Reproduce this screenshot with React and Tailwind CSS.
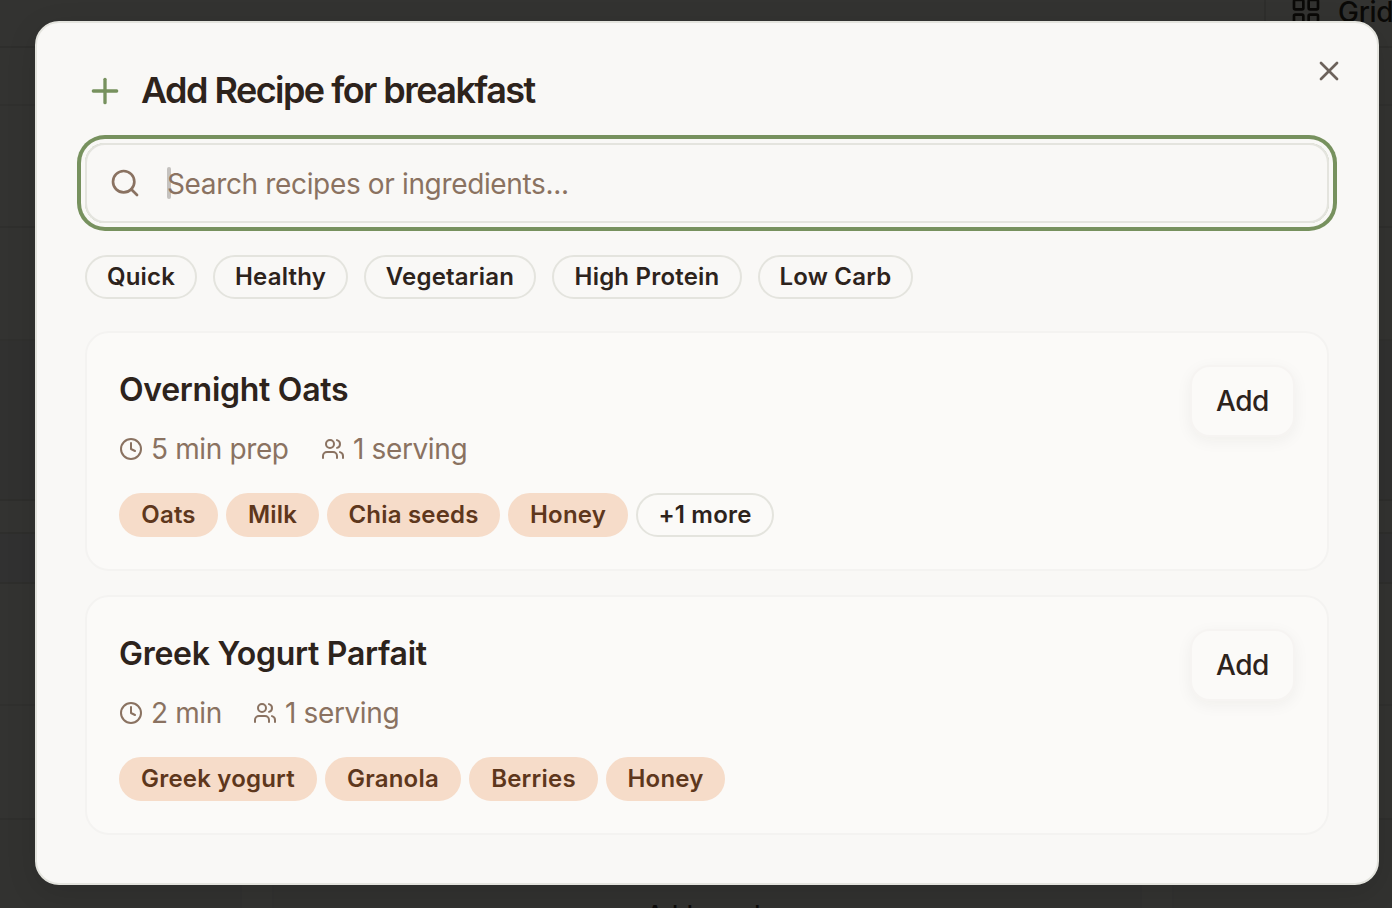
import React from "react";
import { Clock, LayoutGrid, Plus, Search, Users, X } from "lucide-react";

const filters = [
  { label: "Quick", w: "w-[112px]" },
  { label: "Healthy", w: "w-[135px]" },
  { label: "Vegetarian", w: "w-[172px]" },
  { label: "High Protein", w: "w-[190px]" },
  { label: "Low Carb", w: "w-[155px]" },
];

const recipes = [
  {
    name: "Overnight Oats",
    time: "5 min prep",
    timeWidth: "w-[170px]",
    servings: "1 serving",
    tags: [
      { label: "Oats", w: "w-[99px]" },
      { label: "Milk", w: "w-[93px]" },
      { label: "Chia seeds", w: "w-[173px]" },
      { label: "Honey", w: "w-[120px]" },
    ],
    more: "+1 more",
  },
  {
    name: "Greek Yogurt Parfait",
    time: "2 min",
    timeWidth: "w-[102px]",
    servings: "1 serving",
    tags: [
      { label: "Greek yogurt", w: "w-[198px]" },
      { label: "Granola", w: "w-[136px]" },
      { label: "Berries", w: "w-[129px]" },
      { label: "Honey", w: "w-[119px]" },
    ],
  },
];

function Backdrop() {
  return (
    <div className="flex h-full flex-col bg-[#333331]">
      <div className="flex h-[48px] shrink-0 border-b-2 border-[#2e2e2c]">
        <div className="w-[1266px] shrink-0 border-r-2 border-[#2e2e2c]" />
        <div className="flex shrink-0 items-start pl-[24px] text-[#0a0907]">
          <LayoutGrid className="-mt-1 size-8 shrink-0" strokeWidth={2} />
          <span className="-mt-[8px] ml-4 text-[28px] leading-10 font-medium tracking-[-0.3px]">Grid</span>
        </div>
      </div>
      <div className="h-[58px] shrink-0 border-b-2 border-[#30302e]" />
      <div className="h-[122px] shrink-0 border-b-2 border-[#2f2f2d]" />
      <div className="h-[113px] shrink-0 border-b-2 border-[#30302e]" />
      <div className="h-[160px] shrink-0 border-b-2 border-[#2e2e2c] bg-[#313130]" />
      <div className="h-[33px] shrink-0 border-b-2 border-[#2e2e2c]" />
      <div className="h-[50px] shrink-0 border-b-2 border-[#2e2e2c] bg-[#313131]" />
      <div className="h-[122px] shrink-0 border-b-2 border-[#30302e]" />
      <div className="h-[114px] shrink-0 border-b-2 border-[#2f2f2d]" />
      <div className="flex min-h-0 flex-1">
        <div className="w-[242px] border-r-2 border-[#313130] bg-[#323230]" />
        <div className="w-[30px]" />
        <div className="flex w-[870px] justify-center overflow-hidden border-x-2 border-[#313130] bg-[#323230]">
          <span className="mt-[79px] text-[24px] leading-8 font-medium text-[#0d0c0a]">Add snack</span>
        </div>
        <div className="w-[30px]" />
        <div className="flex-1 border-l-2 border-[#313130] bg-[#323230]" />
      </div>
    </div>
  );
}

function Chip({ label, w, filled }) {
  return (
    <span
      className={
        "flex h-11 shrink-0 items-center justify-center rounded-full border-2 text-[24px] leading-8 font-semibold tracking-[0.2px] whitespace-nowrap " +
        w +
        (filled
          ? " border-[#f6dcc9] bg-[#f6dcc9] text-[#5e371c]"
          : " border-[#e4e4de] text-[#2d231c]")
      }
    >
      {label}
    </span>
  );
}

function RecipeCard({ recipe }) {
  return (
    <article className="flex h-[240px] items-start justify-between rounded-[24px] border-2 border-[#f4f3f1] bg-[#fbfaf8] p-8">
      <div>
        <h3 className="h-12 text-[32px] leading-[50px] font-semibold tracking-[-0.28px] text-[#2d231c]">
          {recipe.name}
        </h3>
        <div className="mt-4 flex h-10 items-center gap-8 text-[28px] leading-10 tracking-[-0.37px] text-[#8a7261]">
          <span className={"flex items-center gap-2 whitespace-nowrap " + recipe.timeWidth}>
            <Clock className="size-6 shrink-0" strokeWidth={2} />
            {recipe.time}
          </span>
          <span className="flex items-center gap-2 whitespace-nowrap">
            <Users className="size-6 shrink-0" strokeWidth={2} />
            {recipe.servings}
          </span>
        </div>
        <div className="mt-6 flex gap-2">
          {recipe.tags.map((tag) => (
            <Chip key={tag.label} label={tag.label} w={tag.w} filled />
          ))}
          {recipe.more && <Chip label={recipe.more} w="w-[138px]" />}
        </div>
      </div>
      <button className="flex h-[72px] w-[105px] items-center justify-center rounded-[20px] border-2 border-[#f6f4f2] bg-[#fbfaf8] text-[28px] leading-10 font-medium tracking-[-0.4px] text-[#2d231c] shadow-[0_4px_16px_rgba(45,35,28,0.05)]">
        Add
      </button>
    </article>
  );
}

export default function App() {
  return (
    <div className="relative h-[908px] w-[1392px] overflow-hidden font-['Inter',sans-serif]">
      <Backdrop />
      <div className="absolute top-[21px] left-[35px] flex h-[864px] w-[1344px] flex-col rounded-[24px] border-2 border-[#e4e4de] bg-[#f9f8f6] p-12 shadow-[0_8px_30px_rgba(0,0,0,0.12)]">
        <header className="flex h-10 items-center gap-4">
          <Plus className="size-10 shrink-0 text-[#77915e]" strokeWidth={2} />
          <h2 className="-mt-0.5 text-[36px] leading-10 font-semibold tracking-[-1.55px] whitespace-nowrap text-[#2d231c]">
            Add Recipe for breakfast
          </h2>
        </header>
        <button className="absolute top-8 right-8 flex size-8 items-center justify-center text-[#6c625b]">
          <X className="size-8" strokeWidth={2} />
        </button>
        <div className="mt-8 flex h-20 shrink-0 items-center rounded-[20px] border-2 border-[#e4e4de] pl-[22px] ring-4 ring-[#77915e] ring-offset-4 ring-offset-[#f9f8f6]">
          <Search className="size-8 shrink-0 text-[#8a7261]" strokeWidth={2} />
          <span className="ml-[26px] h-8 w-1 shrink-0 rounded-full bg-[#c5c2bf]" />
          <span className="mt-0.5 -ml-1 text-[28px] leading-10 tracking-[-0.35px] whitespace-nowrap text-[#8a7261]">
            Search recipes or ingredients...
          </span>
        </div>
        <div className="mt-8 flex gap-4">
          {filters.map((f) => (
            <Chip key={f.label} label={f.label} w={f.w} />
          ))}
        </div>
        <div className="mt-8 flex flex-col gap-6">
          {recipes.map((r) => (
            <RecipeCard key={r.name} recipe={r} />
          ))}
        </div>
      </div>
    </div>
  );
}
